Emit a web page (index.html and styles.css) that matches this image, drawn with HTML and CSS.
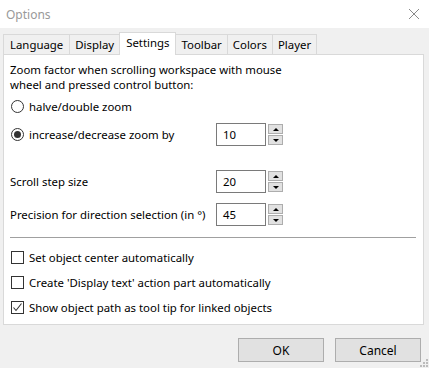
FILE: index.html
```html
<!DOCTYPE html>
<html lang="en">
<head>
  <meta charset="UTF-8">
  <title>Options</title>
  <link rel="stylesheet" href="styles.css">
</head>
<body>
  <div class="window">
    <div class="titlebar">
      <span class="title">Options</span>
      <svg class="close" width="12" height="12" viewBox="0 0 12 12">
        <path d="M1 1 L11 11 M11 1 L1 11" stroke="#8a8a8a" stroke-width="1" fill="none"/>
      </svg>
    </div>

    <div class="tabs">
      <div class="tab">Language</div>
      <div class="tab">Display</div>
      <div class="tab active">Settings</div>
      <div class="tab">Toolbar</div>
      <div class="tab">Colors</div>
      <div class="tab">Player</div>
    </div>

    <div class="panel">
      <div class="intro">
        <div>Zoom factor when scrolling workspace with mouse</div>
        <div>wheel and pressed control button:</div>
      </div>

      <div class="option first">
        <span class="radio"></span>
        <span>halve/double zoom</span>
      </div>

      <div class="field zoom-by">
        <div class="option">
          <span class="radio checked"></span>
          <span>increase/decrease zoom by</span>
        </div>
        <div class="spin">
          <div class="spin-input">10</div>
          <div class="spin-buttons">
            <div class="spin-btn"><span class="arrow up"></span></div>
            <div class="spin-btn"><span class="arrow down"></span></div>
          </div>
        </div>
      </div>

      <div class="field scroll-step">
        <div class="field-label">Scroll step size</div>
        <div class="spin">
          <div class="spin-input">20</div>
          <div class="spin-buttons">
            <div class="spin-btn"><span class="arrow up"></span></div>
            <div class="spin-btn"><span class="arrow down"></span></div>
          </div>
        </div>
      </div>

      <div class="field precision">
        <div class="field-label">Precision for direction selection (in °)</div>
        <div class="spin">
          <div class="spin-input">45</div>
          <div class="spin-buttons">
            <div class="spin-btn"><span class="arrow up"></span></div>
            <div class="spin-btn"><span class="arrow down"></span></div>
          </div>
        </div>
      </div>

      <div class="separator"></div>

      <div class="checks">
        <div class="option">
          <span class="checkbox"></span>
          <span>Set object center automatically</span>
        </div>
        <div class="option">
          <span class="checkbox"></span>
          <span>Create 'Display text' action part automatically</span>
        </div>
        <div class="option">
          <span class="checkbox">
            <svg width="11" height="11" viewBox="0 0 11 11">
              <path d="M1.5 5.5 L4 8.5 L9.5 1.5" stroke="#333" stroke-width="1.1" fill="none"/>
            </svg>
          </span>
          <span>Show object path as tool tip for linked objects</span>
        </div>
      </div>
    </div>

    <div class="buttons">
      <button class="btn">OK</button>
      <button class="btn">Cancel</button>
    </div>

    <svg class="grip" width="8" height="8" viewBox="0 0 8 8">
      <rect x="6" y="0" width="2" height="2" fill="#bcbcbc"/>
      <rect x="3" y="3" width="2" height="2" fill="#bcbcbc"/>
      <rect x="6" y="3" width="2" height="2" fill="#bcbcbc"/>
      <rect x="0" y="6" width="2" height="2" fill="#bcbcbc"/>
      <rect x="3" y="6" width="2" height="2" fill="#bcbcbc"/>
      <rect x="6" y="6" width="2" height="2" fill="#bcbcbc"/>
    </svg>
  </div>
</body>
</html>
```

FILE: styles.css
```css
body {
  margin: 0;
  padding: 0;
  font-family: 'Noto Sans', 'Open Sans', sans-serif;
  font-size: 11.4px;
  color: #000;
  background-color: #f0f0f0;
}

.window {
  position: relative;
  width: 429px;
  height: 368px;
  background-color: #f0f0f0;
  overflow: hidden;
}

.titlebar {
  height: 28px;
  background-color: #fff;
  display: flex;
  align-items: center;
  justify-content: space-between;
  padding: 0 9px 0 6px;
}

.title {
  color: #999;
  font-size: 12px;
}

/* Tabs */

.tabs {
  display: flex;
  align-items: flex-end;
  padding: 4px 0 0 3px;
  height: 22px;
}

.tab {
  height: 19px;
  line-height: 19px;
  padding: 0 5px;
  border: 1px solid #d9d9d9;
  border-bottom: none;
  margin-left: -1px;
  background-color: #f0f0f0;
}

.tab:first-child {
  margin-left: 0;
  padding: 0 6px;
}

.tab.active {
  height: 22px;
  line-height: 20px;
  background-color: #fff;
  position: relative;
  z-index: 1;
  margin-bottom: -1px;
  padding: 0 6px;
}

.panel {
  margin: 0 5px 0 3px;
  height: 271px;
  background-color: #fff;
  border: 1px solid #d9d9d9;
  padding: 0 7px 0 6px;
  box-sizing: border-box;
}

.intro {
  margin: 7px 0 0;
  line-height: 15px;
}

/* Radios and checkboxes */

.option {
  display: flex;
  align-items: center;
  gap: 5px;
  height: 16px;
}

.option.first {
  margin-top: 6px;
}

.radio {
  width: 11px;
  height: 11px;
  border: 1px solid #333;
  border-radius: 50%;
  margin-left: 1px;
  display: flex;
  align-items: center;
  justify-content: center;
}

.radio.checked::after {
  content: '';
  width: 7px;
  height: 7px;
  border-radius: 50%;
  background-color: #333;
}

.checkbox {
  width: 11px;
  height: 11px;
  border: 1px solid #333;
  margin-left: 1px;
  display: flex;
  align-items: center;
  justify-content: center;
}

/* Spin fields */

.field {
  display: flex;
  align-items: center;
  height: 23px;
}

.field > :first-child {
  width: 206px;
}

.zoom-by {
  margin-top: 9px;
}

.scroll-step {
  margin-top: 24px;
}

.precision {
  margin-top: 10px;
}

.spin {
  display: flex;
  align-items: center;
  gap: 2px;
}

.spin-input {
  width: 50px;
  height: 23px;
  box-sizing: border-box;
  border: 1px solid #7a7a7a;
  padding-left: 6px;
  line-height: 21px;
}

.spin-buttons {
  display: flex;
  flex-direction: column;
  gap: 1px;
}

.spin-btn {
  width: 15px;
  height: 10px;
  box-sizing: border-box;
  background-color: #e1e1e1;
  border: 1px solid #adadad;
  display: flex;
  align-items: center;
  justify-content: center;
}

.arrow {
  width: 0;
  height: 0;
  border-left: 3px solid transparent;
  border-right: 3px solid transparent;
}

.arrow.up {
  border-bottom: 3px solid #000;
}

.arrow.down {
  border-top: 3px solid #000;
}

.separator {
  margin: 11px 0 0;
  height: 1px;
  background-color: #a0a0a0;
}

.checks {
  margin-top: 11px;
  display: flex;
  flex-direction: column;
  gap: 9px;
}

/* Dialog buttons */

.buttons {
  display: flex;
  justify-content: flex-end;
  gap: 11px;
  padding: 13px 8px 0 0;
}

.btn {
  width: 86px;
  height: 24px;
  background-color: #e1e1e1;
  border: 1px solid #adadad;
  font-family: inherit;
  font-size: 12px;
  color: #000;
  padding: 0;
}

.grip {
  position: absolute;
  right: 1px;
  bottom: 1px;
}
```
